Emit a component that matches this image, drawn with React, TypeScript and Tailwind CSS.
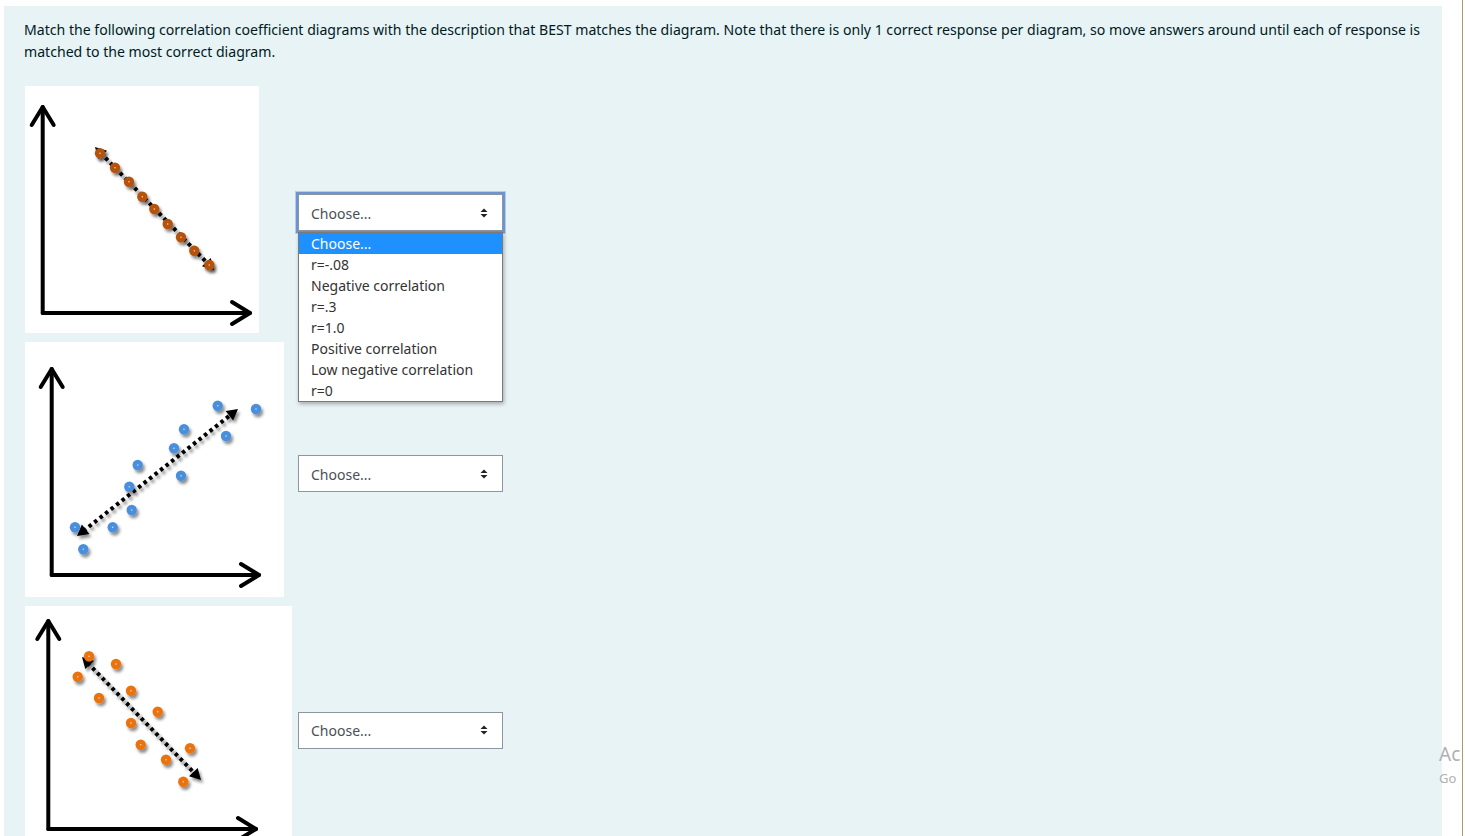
import React from 'react';

type Pt = [number, number];

const font = { fontFamily: '"Noto Sans", "Open Sans", Arial, sans-serif' };

const options = [
  'Choose...',
  'r=-.08',
  'Negative correlation',
  'r=.3',
  'r=1.0',
  'Positive correlation',
  'Low negative correlation',
  'r=0',
];

const Arrow: React.FC<{ from: Pt; to: Pt; size?: number }> = ({ from, to, size = 9 }) => {
  const dx = to[0] - from[0];
  const dy = to[1] - from[1];
  const len = Math.sqrt(dx * dx + dy * dy);
  const ux = dx / len;
  const uy = dy / len;
  const bx = to[0] - ux * size;
  const by = to[1] - uy * size;
  const w = size * 0.55;
  const p1 = `${bx - uy * w},${by + ux * w}`;
  const p2 = `${bx + uy * w},${by - ux * w}`;
  return <polygon points={`${to[0]},${to[1]} ${p1} ${p2}`} fill="#000" />;
};

interface PlotProps {
  id: string;
  width: number;
  height: number;
  axisX: number;
  axisTop: number;
  axisY: number;
  axisRight: number;
  line: [Pt, Pt];
  dots: Pt[];
  color: string;
}

const Plot: React.FC<PlotProps> = ({ id, width, height, axisX, axisTop, axisY, axisRight, line, dots, color }) => {
  const [a, b] = line;
  const dx = b[0] - a[0];
  const dy = b[1] - a[1];
  const len = Math.sqrt(dx * dx + dy * dy);
  const ux = dx / len;
  const uy = dy / len;
  return (
    <div className="bg-white" style={{ width, height }}>
      <svg width={width} height={height} viewBox={`0 0 ${width} ${height}`}>
        <defs>
          <filter id={id} x="-50%" y="-50%" width="200%" height="200%">
            <feDropShadow dx="2" dy="3" stdDeviation="1.6" floodColor="#000" floodOpacity="0.45" />
          </filter>
        </defs>
        {/* axes */}
        <g stroke="#000" strokeWidth="4" fill="none" strokeLinecap="round" strokeLinejoin="round">
          <line x1={axisX} y1={axisTop + 2} x2={axisX} y2={axisY} />
          <line x1={axisX} y1={axisY} x2={axisRight - 2} y2={axisY} />
          <polyline points={`${axisX - 11},${axisTop + 20} ${axisX},${axisTop + 2} ${axisX + 11},${axisTop + 20}`} />
          <polyline points={`${axisRight - 20},${axisY - 11} ${axisRight - 2},${axisY} ${axisRight - 20},${axisY + 11}`} />
        </g>
        {/* trend line */}
        <g filter={`url(#${id})`}>
          <line
            x1={a[0] + ux * 8}
            y1={a[1] + uy * 8}
            x2={b[0] - ux * 8}
            y2={b[1] - uy * 8}
            stroke="#000"
            strokeWidth="4"
            strokeDasharray="3.5 3.5"
          />
          <Arrow from={b} to={a} size={11} />
          <Arrow from={a} to={b} size={11} />
        </g>
        {/* points */}
        <g filter={`url(#${id})`}>
          {dots.map(([x, y], i) => (
            <g key={i}>
              <circle cx={x} cy={y} r="5.2" fill={color} />
              <circle cx={x} cy={y} r="0.8" fill="#fff" opacity="0.7" />
            </g>
          ))}
        </g>
      </svg>
    </div>
  );
};

const SelectArrows = () => (
  <svg width="8" height="10" viewBox="0 0 8 10" className="absolute right-[14px] top-1/2 -translate-y-1/2">
    <polygon points="4,0.5 7.5,4 0.5,4" fill="#222" />
    <polygon points="0.5,6 7.5,6 4,9.5" fill="#222" />
  </svg>
);

const Select: React.FC<{ focused?: boolean; open?: boolean }> = ({ focused, open }) => (
  <div className="relative w-[205px]">
    <div
      className={
        focused
          ? 'relative h-[37px] bg-white border border-[#8f959e] outline-[2px] outline outline-[#6a94d4] shadow-[0_0_0_3px_rgba(140,170,220,0.55)]'
          : 'relative h-[37px] bg-white border border-[#8f959e]'
      }
    >
      <span className="absolute left-[12px] top-1/2 -translate-y-1/2 text-[14px] text-[#495057]">Choose...</span>
      <SelectArrows />
    </div>
    {open && (
      <div className="absolute left-0 top-[38px] z-10 w-[205px] bg-white border border-[#7a7a7a] shadow-[1px_2px_4px_rgba(0,0,0,0.3)]">
        {options.map((o, i) => (
          <div
            key={o}
            className={
              i === 0
                ? 'h-[21px] leading-[21px] pl-[12px] text-[14px] bg-[#1e90ff] text-white'
                : 'h-[21px] leading-[21px] pl-[12px] text-[14px] text-[#333]'
            }
          >
            {o}
          </div>
        ))}
      </div>
    )}
  </div>
);

export default function App() {
  return (
    <div className="relative min-h-[836px] bg-white overflow-hidden" style={font}>
      <div className="ml-[4px] mt-[6px] w-[1438px] bg-[#e7f3f5] pl-[20px] pr-[20px] pt-[13px] pb-[10px] text-[#001a1e]">
        <p className="text-[14.1px] leading-[22px] mb-[23px]">
          <span className="whitespace-nowrap">
            Match the following correlation coefficient diagrams with the description that BEST matches the diagram. Note that
            there is only 1 correct response per diagram, so move answers around until each of response is
          </span>
          <br />
          matched to the most correct diagram.
        </p>
        <div className="grid grid-cols-[273px_auto] justify-start items-center gap-y-[9px] ml-[1px]">
          <div>
            <Plot
              id="s1"
              width={234}
              height={247}
              axisX={17.7}
              axisTop={19}
              axisY={227}
              axisRight={227}
              line={[
                [70, 61],
                [189, 184],
              ]}
              dots={[
                [75, 67.3],
                [90, 81.7],
                [104, 95.7],
                [117.3, 110.7],
                [129.3, 123],
                [142.7, 138],
                [156, 151.3],
                [169.3, 164.7],
                [184.3, 179],
              ]}
              color="#b5530d"
            />
          </div>
          <div className="pt-[6px]">
            <Select focused open />
          </div>
          <div>
            <Plot
              id="s2"
              width={259}
              height={255}
              axisX={26.7}
              axisTop={25}
              axisY={233}
              axisRight={236}
              line={[
                [52, 194],
                [213, 67],
              ]}
              dots={[
                [192.7, 63.7],
                [231, 67],
                [201, 94],
                [159, 87.3],
                [149, 106.3],
                [156, 133.7],
                [112.7, 123],
                [104.3, 144.7],
                [106.7, 168],
                [87.7, 185.3],
                [50, 185.3],
                [58.3, 207.3],
              ]}
              color="#4a8fdb"
            />
          </div>
          <div className="pt-[8px]">
            <Select />
          </div>
          <div>
            <Plot
              id="s3"
              width={267}
              height={240}
              axisX={23.3}
              axisTop={13}
              axisY={223}
              axisRight={233}
              line={[
                [57, 51],
                [176, 174],
              ]}
              dots={[
                [64, 50.3],
                [91, 58],
                [52.7, 70.7],
                [106, 84.7],
                [74, 92],
                [132.7, 105.7],
                [106, 117],
                [115.7, 138.7],
                [165, 142.3],
                [141, 153.7],
                [158.3, 175.7],
              ]}
              color="#eb730c"
            />
          </div>
          <div className="pt-[8px]">
            <Select />
          </div>
        </div>
      </div>
      {/* right edge */}
      <div className="absolute top-0 left-[1462px] w-[1px] h-[836px] bg-[#b39b5e]" />
      <div className="absolute left-[1439px] top-[745px] text-[#b0b0b0] leading-none whitespace-nowrap">
        <div className="text-[19px]">Ac</div>
        <div className="text-[13px] mt-[8px]">Go</div>
      </div>
    </div>
  );
}
